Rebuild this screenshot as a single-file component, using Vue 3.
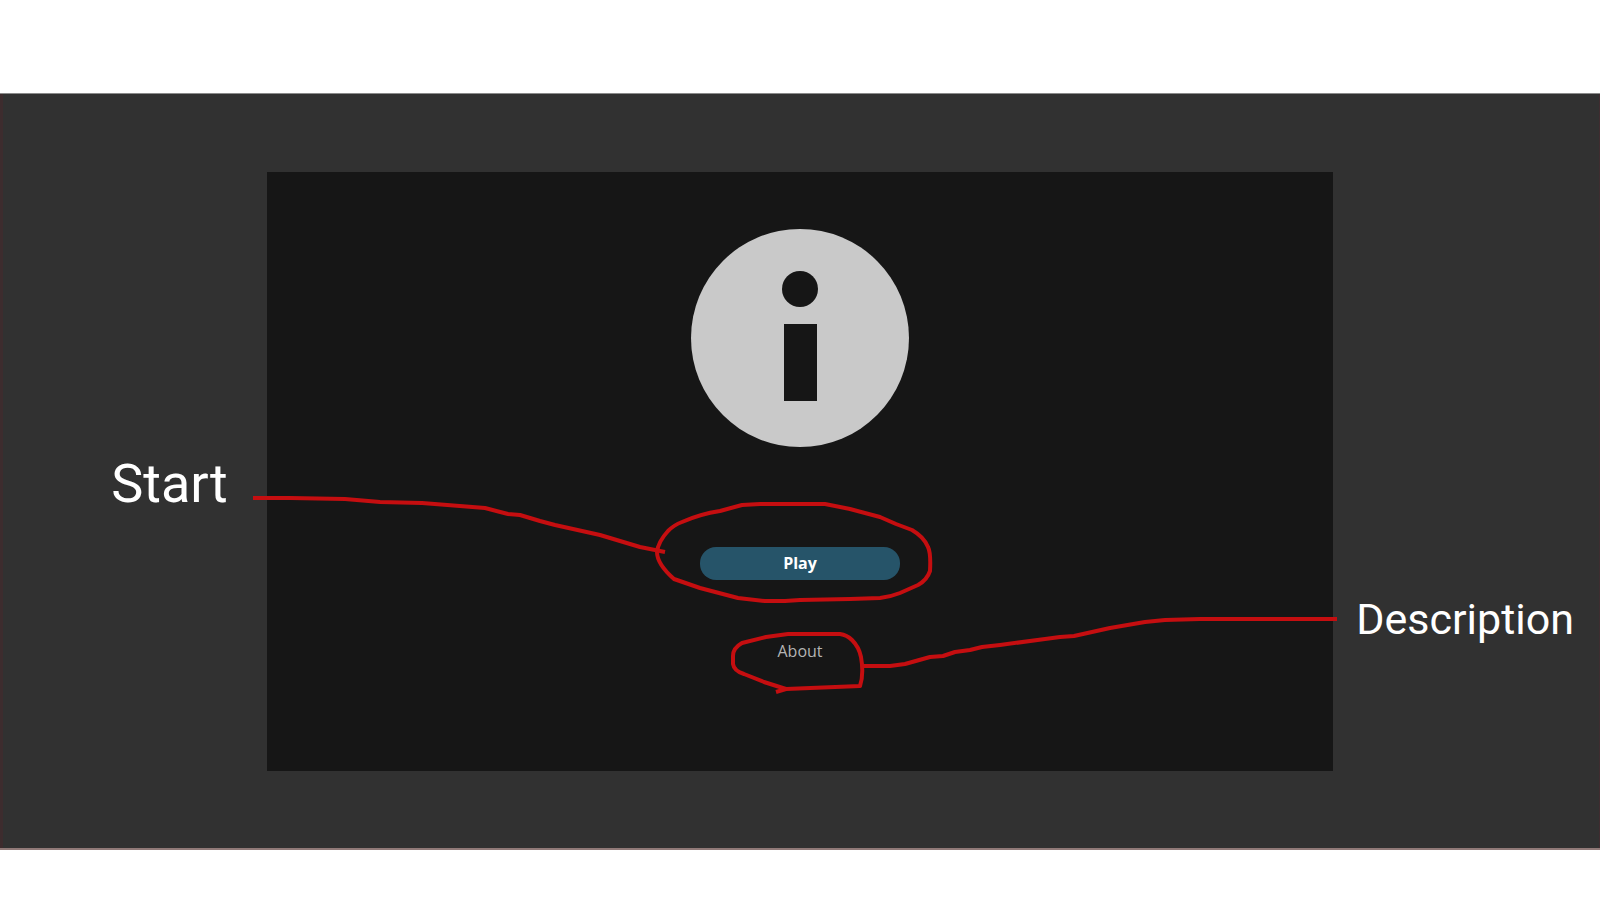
<script setup>
const strokes = [
  'M253 498 L290 498 L345 499 L380 502 L422 503 L485 508 L508 514 L520 515 L540 521 L555 525 L600 535 L620 541 L640 547 L665 552',
  'M657 552 Q658 542 668 531 Q674 525 682 522 Q700 514 720 511 L742 505 L760 504 L825 504 L850 509 L880 517 L896 524 L912 530 Q924 537 928 547 Q931 553 930 571 Q927 580 918 585 L900 593 Q890 597 880 598 L850 599 L800 600 L785 601 L765 601 L738 598 L700 588 L674 579 Q657 564 657 552',
  'M776 692 L786 689 L860 686 Q864 674 861 657 Q859 647 852 640 Q847 635 840 634 L788 634 L766 637 L742 643 Q733 648 733 656 L733 664 Q734 671 744 674 L764 682 L786 689',
  'M863 666 L890 666 L905 664 L930 657 L943 656 L955 652 L970 650 L982 647 L1000 645 L1045 639 L1060 637 L1074 636 L1110 628 L1145 622 L1165 620 L1200 619 L1337 619',
]
</script>

<template>
  <main class="page">
    <section class="stage">
      <div class="side side-left">
        <p class="note note-start">Start</p>
      </div>

      <div class="panel">
        <svg class="info" viewBox="0 0 218 218" role="img" aria-label="Information">
          <circle cx="109" cy="109" r="109" fill="#c9c9c9" />
          <circle cx="109" cy="60" r="18" fill="#161616" />
          <rect x="93" y="95" width="33" height="77" fill="#161616" />
        </svg>
        <button class="play" type="button">Play</button>
        <a class="about" href="#about">About</a>
      </div>

      <div class="side side-right">
        <p class="note note-description">Description</p>
      </div>

      <svg class="marks" viewBox="0 94 1600 754" preserveAspectRatio="none" aria-hidden="true">
        <path v-for="d in strokes" :key="d" :d="d" />
      </svg>
    </section>
  </main>
</template>

<style>
html,
body {
  background: #ffffff;
}
</style>

<style scoped>
.page {
  padding: 93px 0 50px;
}

.stage {
  position: relative;
  display: grid;
  grid-template-columns: 1fr 4fr 1fr;
  background: #313131;
  border-top: 1px solid #8a8a8a;
  border-bottom: 2px solid #917a78;
  box-shadow: inset 3px 0 #3d2c2e, inset -1px 0 #402c30;
}

.side {
  display: flex;
  min-width: 0;
}

.side-left {
  justify-content: flex-end;
  padding: 360px 39px 0 0;
}

.side-right {
  padding: 501px 0 0 23px;
}

.note {
  margin: 0;
  color: #ffffff;
  font-family: Roboto, "Liberation Sans", sans-serif;
  white-space: nowrap;
}

.note-start {
  font-size: 54px;
  line-height: 60px;
}

.note-description {
  font-size: 43px;
  line-height: 48px;
}

.panel {
  display: flex;
  flex-direction: column;
  align-items: center;
  margin: 78px 0 77px;
  padding: 57px 0 108px;
  background: #161616;
  font-family: "Open Sans", "Noto Sans", sans-serif;
}

.info {
  width: 218px;
  height: 218px;
}

.play {
  width: 200px;
  height: 33px;
  margin-top: 100px;
  padding: 0;
  border: 0;
  border-radius: 16px;
  background: #265469;
  color: #ffffff;
  font-family: inherit;
  font-size: 16px;
  font-weight: 700;
  line-height: 33px;
}

.about {
  margin-top: 59px;
  color: #b4b4b4;
  font-size: 16px;
  line-height: 24px;
  text-decoration: none;
}

.marks {
  position: absolute;
  inset: 0;
  width: 100%;
  height: 100%;
  pointer-events: none;
}

.marks path {
  fill: none;
  stroke: #c50e10;
  stroke-width: 4;
  stroke-linejoin: round;
}
</style>
